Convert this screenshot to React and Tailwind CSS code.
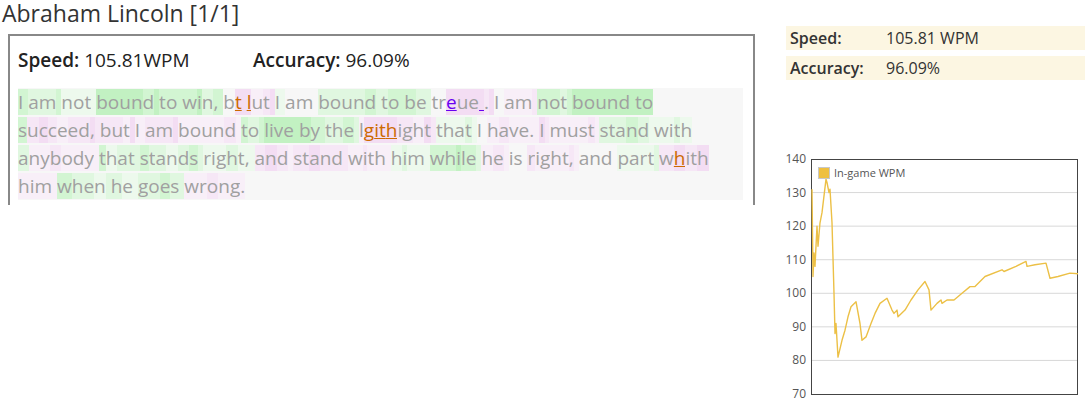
import React from "react";

const heat = {
  n: "transparent",
  g0: "#edf9ed",
  g1: "#e0f7e0",
  g2: "#d2f5d2",
  g3: "#c2f1c2",
  p0: "#f8eff8",
  p1: "#f6e7f6",
  p2: "#f3ddf3",
};
const gLevels = ["g0", "g1", "g2", "g3"];
const pLevels = ["p0", "p1", "p2"];

const lines = [
  [["I ", "g2"], ["am ", "g1"], ["not ", "g0"], ["bound ", "g3"], ["to ", "g2"], ["win, ", "g2"], ["b", "n"], ["t", "p2", "o"], [" ", "p2"], ["l", "p2", "o"], ["ut ", "p1"], ["I ", "g0"], ["am ", "n"], ["bound ", "g1"], ["to ", "g2"], ["be ", "g1"], ["tr", "n"], ["e", "p2", "u"], ["ue", "p2"], [" ", "p2", "u"], [". ", "p1"], ["I ", "n"], ["am ", "p0"], ["not ", "g2"], ["bound ", "g3"], ["to", "g3"]],
  [["s", "g2"], ["ucceed, ", "p1"], ["but ", "p1"], ["I ", "p0"], ["am ", "p1"], ["bound ", "p0"], ["to ", "g2"], ["live ", "g3"], ["by ", "g2"], ["the ", "g1"], ["l", "p1"], ["gith", "p2", "o"], ["ight ", "p1"], ["that ", "g0"], ["I ", "n"], ["have. ", "p0"], ["I ", "p1"], ["must ", "p0"], ["stand ", "g1"], ["with", "g0"]],
  [["a", "g1"], ["nybody ", "p0"], ["that ", "g1"], ["stands ", "g1"], ["right, ", "g0"], ["and ", "p1"], ["stand ", "p1"], ["with ", "p0"], ["him ", "g0"], ["while ", "g2"], ["he ", "p0"], ["is ", "n"], ["right, ", "p0"], ["and ", "n"], ["part ", "g0"], ["w", "p1"], ["h", "p2", "o"], ["ith", "p1"]],
  [["him ", "p0"], ["when ", "g1"], ["he ", "g0"], ["goes ", "g1"], ["wrong.", "p0"]],
];

function shade(level, i) {
  if (level === "n") return heat.n;
  const list = level[0] === "g" ? gLevels : pLevels;
  let k = list.indexOf(level);
  if ((i * 37) % 5 === 0) k += 1;
  else if ((i * 13) % 7 === 0) k -= 1;
  k = Math.max(0, Math.min(list.length - 1, k));
  return heat[list[k]];
}

function TypedText() {
  let n = 0;
  return (
    <div className="bg-[#f7f7f7] text-[#a0a0a0] text-[19px] leading-[28px]">
      {lines.map((line, li) => (
        <div key={li} className="whitespace-pre">
          {line.map(([text, level, err], wi) =>
            text.split("").map((ch, ci) => {
              n += 1;
              const errCls =
                err === "o"
                  ? "text-[#cc6a00] underline"
                  : err === "u"
                  ? "text-[#6a00f0] underline"
                  : "";
              return (
                <span
                  key={wi + "-" + ci}
                  className={errCls}
                  style={{ backgroundColor: shade(level, n) }}
                >
                  {ch}
                </span>
              );
            })
          )}
        </div>
      ))}
    </div>
  );
}

// pixel x (page) and wpm value, read off the reference plot
const wpm = [
  [812, 131], [813, 105], [814, 112], [815, 108], [817, 120], [818, 114],
  [820, 121], [822, 124], [826, 134], [827, 133], [829, 130], [830, 131],
  [832, 121], [834, 100], [835, 88], [836, 91], [838, 81], [842, 86],
  [845, 89], [848, 93], [851, 96], [856, 97.5], [860, 91], [862, 86],
  [866, 87], [871, 91], [875, 94], [880, 97], [887, 98.5], [892, 95],
  [894, 94], [897, 95], [898, 93], [905, 95], [911, 98], [918, 101],
  [925, 103.5], [929, 101], [931, 95], [937, 97], [941, 98], [942, 97],
  [947, 98], [954, 98], [962, 100], [970, 102], [975, 102], [985, 105],
  [1002, 107], [1004, 106.5], [1016, 108], [1026, 109.5], [1027, 108],
  [1035, 108.5], [1046, 109], [1050, 104.5], [1058, 105], [1070, 106],
  [1078, 105.8],
];

function WpmChart() {
  const y = (v) => 8 + (140 - v) * (235 / 70);
  const ticks = [140, 130, 120, 110, 100, 90, 80, 70];
  const pts = wpm.map(([px, v]) => `${px - 780},${y(v).toFixed(1)}`).join(" ");
  return (
    <svg width="305" height="250" className="block">
      {ticks.map((t) => (
        <g key={t}>
          {t !== 140 && t !== 70 && (
            <line x1="32" x2="298" y1={y(t)} y2={y(t)} stroke="#d8d8d8" strokeWidth="1" />
          )}
          <text x="26" y={y(t) + 4} textAnchor="end" fontSize="12" fill="#555" fontFamily="'Open Sans', sans-serif">
            {t}
          </text>
        </g>
      ))}
      <rect x="31.5" y="8.5" width="266" height="235" fill="none" stroke="#444" strokeWidth="1" />
      <polyline points={pts} fill="none" stroke="#ecc046" strokeWidth="1.4" strokeLinejoin="round" />
      <rect x="38.5" y="16.5" width="11" height="11" fill="#efc03f" stroke="#c8c8c8" />
      <text x="54" y="26" fontSize="11" fill="#555" fontFamily="'Open Sans', sans-serif">
        In-game WPM
      </text>
    </svg>
  );
}

export default function App() {
  return (
    <div className="flex w-[1085px] h-[412px] overflow-hidden bg-white font-['Open_Sans',sans-serif] text-[#222]">
      <div className="w-[786px] shrink-0">
        <h1 className="pl-[2px] text-[23px] leading-[26px] text-[#333]">Abraham Lincoln [1/1]</h1>
        <div className="mt-[8px] ml-2 w-[747px] border-2 border-b-0 border-[#888] pl-[7px] pr-[10px] pt-[12px] pb-[5px]">
          <div className="flex pl-[1px] text-[19px] leading-[24px]">
            <div className="w-[235px]">
              <b className="font-semibold">Speed:</b> 105.81WPM
            </div>
            <div>
              <b className="font-semibold">Accuracy:</b> 96.09%
            </div>
          </div>
          <div className="mt-[16px] pl-[1px]">
            <TypedText />
          </div>
        </div>
      </div>
      <div className="w-[299px] pt-[26px]">
        <div className="flex flex-col gap-[6px] text-[16px] leading-[24px] text-[#333]">
          <div className="flex bg-[#fcf6e2] px-1">
            <span className="w-[96px] font-semibold">Speed:</span>
            <span>105.81 WPM</span>
          </div>
          <div className="flex bg-[#fcf6e2] px-1">
            <span className="w-[96px] font-semibold">Accuracy:</span>
            <span>96.09%</span>
          </div>
        </div>
        <div className="mt-[71px] -ml-[6px]">
          <WpmChart />
        </div>
      </div>
    </div>
  );
}
